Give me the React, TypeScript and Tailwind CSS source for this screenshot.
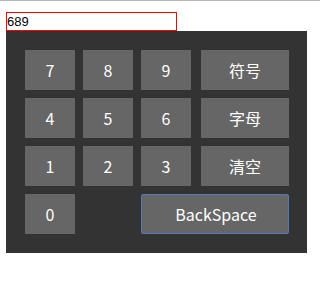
import React, { useState } from 'react';

const keyClass =
  "flex items-center justify-center h-[40px] bg-[#666666] text-white text-[16px] leading-none";

const keys = [
  ['7', '8', '9', '符号'],
  ['4', '5', '6', '字母'],
  ['1', '2', '3', '清空'],
];

export default function App() {
  const [value, setValue] = useState('689');

  const press = (k: string) => {
    if (k === '清空') setValue('');
    else if (/^\d$/.test(k)) setValue(value + k);
  };

  return (
    <div
      className="w-[320px] h-[292px] bg-white border-t border-[#b9b9b9]"
      style={{ fontFamily: '"Noto Sans CJK SC", "Noto Sans", sans-serif' }}
    >
      <div className="pl-[6px] pt-[11px]">
        <input
          value={value}
          onChange={(e) => setValue(e.target.value)}
          className="block w-[171px] h-[19px] border border-[#ff0000] px-0 text-[13px] leading-none text-black outline-none"
          style={{ fontFamily: '"Liberation Sans", Arial, sans-serif' }}
        />
        {/* Keypad */}
        <div className="w-[301px] h-[222px] bg-[#333333] pl-[19px] pt-[19px]">
          <div className="grid grid-cols-[50px_50px_50px_90px] grid-rows-[40px_40px_40px_40px] gap-x-[8px] gap-y-[8px]">
            {keys.map((row) =>
              row.map((k, i) => (
                <button
                  key={k}
                  onClick={() => press(k)}
                  className={`${keyClass} ${i === 3 ? 'ml-[2px]' : ''}`}
                >
                  {k}
                </button>
              ))
            )}
            <button onClick={() => press('0')} className={keyClass}>0</button>
            <div />
            <button
              onClick={() => setValue(value.slice(0, -1))}
              className="col-span-2 flex items-center justify-center h-[40px] bg-[#666666] text-white text-[16px] leading-none border border-[#5479b8] rounded-[2px] pl-[2px]"
            >
              BackSpace
            </button>
          </div>
        </div>
      </div>
    </div>
  );
}
